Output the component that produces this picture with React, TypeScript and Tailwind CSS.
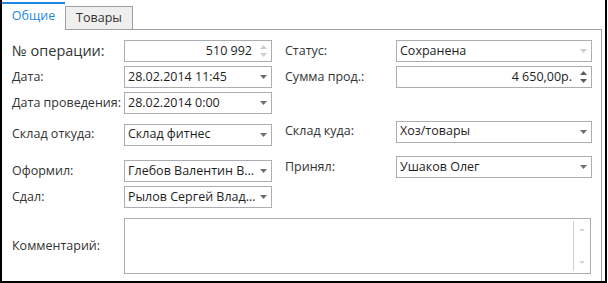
import React from "react";

const Arrow = ({ light }: { light?: boolean }) => (
  <svg width="7" height="4" viewBox="0 0 7 4" className="block">
    <path d="M0 0h7L3.5 4z" fill={light ? "#cdcdcd" : "#6e6e6e"} />
  </svg>
);

const Spin = ({ light }: { light?: boolean }) => (
  <div className="flex flex-col items-center gap-[4px]">
    <svg width="7" height="4" viewBox="0 0 7 4" className="block">
      <path d="M0 4h7L3.5 0z" fill={light ? "#cdcdcd" : "#5a5a5a"} />
    </svg>
    <svg width="7" height="4" viewBox="0 0 7 4" className="block">
      <path d="M0 0h7L3.5 4z" fill={light ? "#cdcdcd" : "#5a5a5a"} />
    </svg>
  </div>
);

type FieldProps = {
  text: string;
  w: string;
  right?: boolean;
  kind: "drop" | "spin";
  light?: boolean;
};

const Field = ({ text, w, right, kind, light }: FieldProps) => (
  <div className={`flex h-[22px] items-center border border-[#abadb3] bg-white ${w}`}>
    <span
      className={`flex-1 overflow-hidden whitespace-nowrap text-[12.5px] text-[#1e1e1e] ${
        right ? "pr-[3px] text-right" : "pl-[3px]"
      }`}
    >
      {text}
    </span>
    <span className="flex w-[16px] shrink-0 justify-center">
      {kind === "drop" ? <Arrow light={light} /> : <Spin light={light} />}
    </span>
  </div>
);

const Label = ({ children, w, big }: { children: React.ReactNode; w: string; big?: boolean }) => (
  <span className={`${w} shrink-0 whitespace-nowrap ${big ? "text-[14.5px]" : "text-[12.5px]"} text-[#333]`}>
    {children}
  </span>
);

export default function App() {
  return (
    <div className="h-[283px] w-[607px] border-b-2 border-l-2 border-r-2 border-black bg-white font-['Open_Sans',sans-serif]">
      <div className="w-[600px]">
        {/* tabs */}
        <div className="flex h-[30px] items-end">
          <div className="flex h-[28px] w-[63px] items-center justify-center border-t-2 border-[#1e88e5] bg-white pb-[1px] text-[12.5px] text-[#1e88e5]">
            Общие
          </div>
          <div className="flex h-[24px] w-[68px] items-center justify-center border border-[#a0a0a0] bg-[#efefef] text-[12.5px] text-[#333]">
            Товары
          </div>
          <div className="h-[1px] flex-1 bg-[#a0a0a0]" />
        </div>
        {/* panel */}
        <div className="h-[251px] border-r border-[#a0a0a0] pl-[10px] pt-[10px]">
          <div className="flex">
            {/* left column */}
            <div className="flex w-[262px] flex-col">
              <div className="flex h-[22px] items-center">
                <Label w="w-[112px]" big>№ операции:</Label>
                <Field text="510 992" w="w-[148px]" right kind="spin" light />
              </div>
              <div className="mt-[4px] flex h-[22px] items-center">
                <Label w="w-[112px]">Дата:</Label>
                <Field text="28.02.2014 11:45" w="w-[148px]" kind="drop" />
              </div>
              <div className="mt-[4px] flex h-[22px] items-center">
                <Label w="w-[112px]">Дата проведения:</Label>
                <Field text="28.02.2014 0:00" w="w-[148px]" kind="drop" />
              </div>
              <div className="mt-[9px] flex h-[23px] items-center">
                <Label w="w-[112px]">Склад откуда:</Label>
                <Field text="Склад фитнес" w="w-[148px]" kind="drop" />
              </div>
              <div className="mt-[14px] flex h-[22px] items-center">
                <Label w="w-[112px]">Оформил:</Label>
                <Field text="Глебов Валентин В..." w="w-[148px]" kind="drop" />
              </div>
              <div className="mt-[4px] flex h-[22px] items-center">
                <Label w="w-[112px]">Сдал:</Label>
                <Field text="Рылов Сергей Влад..." w="w-[148px]" kind="drop" />
              </div>
            </div>
            {/* right column */}
            <div className="ml-[11px] flex flex-col">
              <div className="flex h-[22px] items-center">
                <Label w="w-[111px]">Статус:</Label>
                <Field text="Сохранена" w="w-[196px]" kind="drop" light />
              </div>
              <div className="mt-[4px] flex h-[22px] items-center">
                <Label w="w-[111px]">Сумма прод.:</Label>
                <Field text="4 650,00р." w="w-[196px]" right kind="spin" />
              </div>
              <div className="mt-[32px] flex h-[23px] items-center">
                <Label w="w-[111px]">Склад куда:</Label>
                <Field text="Хоз/товары" w="w-[196px]" kind="drop" />
              </div>
              <div className="mt-[13px] flex h-[22px] items-center">
                <Label w="w-[111px]">Принял:</Label>
                <Field text="Ушаков Олег" w="w-[196px]" kind="drop" />
              </div>
            </div>
          </div>
          {/* comment */}
          <div className="mt-[10px] flex items-center">
            <Label w="w-[112px]">Комментарий:</Label>
            <div className="flex h-[56px] w-[467px] border border-[#abadb3] bg-white">
              <div className="flex-1" />
              <div className="my-[2px] flex w-[17px] flex-col items-center justify-between border-l border-[#cfcfcf] py-[7px]">
                <svg width="6" height="3" viewBox="0 0 6 3" className="block">
                  <path d="M0 3h6L3 0z" fill="#d4d4d4" />
                </svg>
                <svg width="6" height="3" viewBox="0 0 6 3" className="block">
                  <path d="M0 0h6L3 3z" fill="#d4d4d4" />
                </svg>
              </div>
            </div>
          </div>
        </div>
      </div>
    </div>
  );
}
